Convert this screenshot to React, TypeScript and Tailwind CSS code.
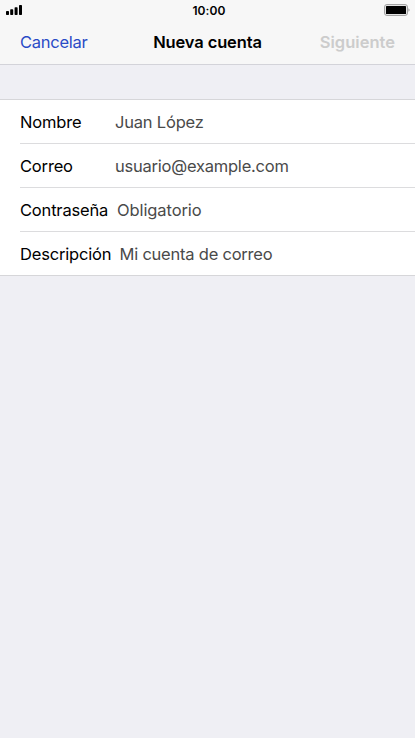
const rows = [
  { label: 'Nombre', value: 'Juan López', column: 'w-[95px]', track: 'tracking-[-0.2px]' },
  { label: 'Correo', value: 'usuario@example.com', column: 'w-[95px]', track: 'tracking-[-0.23px]' },
  { label: 'Contraseña', value: 'Obligatorio', column: 'w-[97px]', track: 'tracking-[-0.1px]' },
  { label: 'Descripción', value: 'Mi cuenta de correo', column: 'w-[99.5px]', track: 'tracking-[-0.22px]' },
];

function SignalIcon() {
  return (
    <svg width="16" height="10" viewBox="0 0 16 10">
      <rect x="0" y="6" width="3" height="4" rx="0.7" />
      <rect x="4.2" y="4.3" width="3" height="5.7" rx="0.7" />
      <rect x="8.6" y="2.2" width="3" height="7.8" rx="0.7" />
      <rect x="13" y="0" width="3" height="10" rx="0.7" />
    </svg>
  );
}

function BatteryIcon() {
  return (
    <svg className="justify-self-end" width="26" height="12" viewBox="0 0 26 12">
      <rect x="0.5" y="0.5" width="23" height="11" rx="2.5" fill="#e4e4e4" stroke="#a3a3a3" />
      <rect x="2" y="2" width="20" height="8" rx="0.6" />
      <path d="M24.5 4.2c1.3.6 1.3 3 0 3.6z" fill="#8a8a8a" />
    </svg>
  );
}

export default function App() {
  return (
    <div className="flex h-[738px] w-[415px] flex-col overflow-hidden bg-[#efeff4] font-[Inter,sans-serif] text-black">
      <header className="h-[65px] border-b border-[#d3d3d9] bg-[#f7f7f7]">
        <div className="grid h-5 grid-cols-3 items-center pr-[5px] pl-1.5">
          <SignalIcon />
          <span className="pt-px pl-[2px] text-center text-xs leading-none font-semibold tracking-[0.1px]">10:00</span>
          <BatteryIcon />
        </div>
        <div className="grid h-11 grid-cols-[1fr_auto_1fr] items-center px-5 text-[16.5px]">
          <span className="tracking-[-0.25px] text-[#2a4bc6]">Cancelar</span>
          <span className="font-semibold tracking-[-0.13px]">Nueva cuenta</span>
          <span className="text-right font-semibold tracking-[0.02px] text-[#cccccc]">Siguiente</span>
        </div>
      </header>
      <main className="mt-[34px] border-y border-[#d6d6d9] bg-white pl-5 text-[16.5px]">
        {rows.map((row) => (
          <div
            key={row.label}
            className="flex h-11 items-center border-b border-[#dcdcde] pt-[2px] whitespace-nowrap last:h-[43px] last:border-b-0"
          >
            <span className={`${row.column} tracking-[-0.18px]`}>{row.label}</span>
            <span className={`${row.track} text-[#4a4a4a]`}>{row.value}</span>
          </div>
        ))}
      </main>
    </div>
  );
}
